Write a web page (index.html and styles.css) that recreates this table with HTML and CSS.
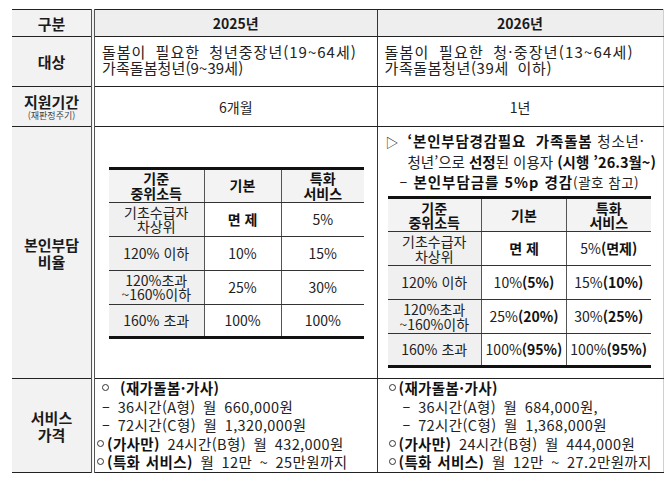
FILE: index.html
```html
<!DOCTYPE html>
<html lang="ko">
<head>
<meta charset="utf-8">
<link rel="stylesheet" href="styles.css">
</head>
<body>
<table class="main">
  <colgroup><col class="c1"><col class="c2"><col class="c3"></colgroup>
  <tr class="r-head">
    <th class="lab"><div class="box">구분</div></th>
    <th class="yr"><div class="box">2025년</div></th>
    <th class="yr"><div class="box">2026년</div></th>
  </tr>
  <tr class="r-target">
    <th class="lab"><div class="box">대상</div></th>
    <td class="txt t25"><div class="box"><span class="a">돌봄이 필요한 청년중장년(19~64세)</span><span class="c">가족돌봄청년(9~39세)</span></div></td>
    <td class="txt t26"><div class="box"><span class="a">돌봄이 필요한 청·중장년(13~64세)</span><span class="c">가족돌봄청년(39세 이하)</span></div></td>
  </tr>
  <tr class="r-period">
    <th class="lab"><div class="box">지원기간<span class="sublab">(재판정주기)</span></div></th>
    <td class="ctr"><div class="box">6개월</div></td>
    <td class="ctr"><div class="box">1년</div></td>
  </tr>
  <tr class="r-ratio">
    <th class="lab"><div class="box">본인부담<br>비율</div></th>
    <td class="ratio25">
      <div class="box">
        <table class="sub sub25">
          <colgroup><col class="s1"><col class="s2"><col class="s3"></colgroup>
          <tr class="sh"><th><div class="b">기준<br>중위소득</div></th><th><div class="b">기본</div></th><th><div class="b">특화<br>서비스</div></th></tr>
          <tr><td class="k"><div class="b">기초수급자<br>차상위</div></td><td><div class="b"><b>면 제</b></div></td><td><div class="b">5%</div></td></tr>
          <tr><td class="k"><div class="b">120% 이하</div></td><td><div class="b">10%</div></td><td><div class="b">15%</div></td></tr>
          <tr><td class="k"><div class="b">120%초과<br>~160%이하</div></td><td><div class="b">25%</div></td><td><div class="b">30%</div></td></tr>
          <tr class="last"><td class="k"><div class="b">160% 초과</div></td><td><div class="b">100%</div></td><td><div class="b">100%</div></td></tr>
        </table>
      </div>
    </td>
    <td class="ratio26">
      <div class="box">
        <div class="intro">
          <div class="l1"><span class="tri">▷</span><b>‘본인부담경감필요&nbsp; 가족돌봄</b> 청소년·</div>
          <div class="l2">청년’으로 <b>선정</b>된 이용자 <b>(시행 ’26.3월~)</b></div>
          <div class="l3">– <b>본인부담금를 5%p 경감</b><span class="sm">(괄호 참고)</span></div>
        </div>
        <table class="sub sub26">
          <colgroup><col class="t1"><col class="t2"><col class="t3"></colgroup>
          <tr class="sh"><th><div class="b">기준<br>중위소득</div></th><th><div class="b">기본</div></th><th><div class="b">특화<br>서비스</div></th></tr>
          <tr><td class="k"><div class="b">기초수급자<br>차상위</div></td><td><div class="b"><b>면 제</b></div></td><td><div class="b"><span>5%<b>(면제)</b></span></div></td></tr>
          <tr><td class="k"><div class="b">120% 이하</div></td><td><div class="b"><span>10%<b>(5%)</b></span></div></td><td><div class="b"><span>15%<b>(10%)</b></span></div></td></tr>
          <tr><td class="k"><div class="b">120%초과<br>~160%이하</div></td><td><div class="b"><span>25%<b>(20%)</b></span></div></td><td><div class="b"><span>30%<b>(25%)</b></span></div></td></tr>
          <tr class="last"><td class="k"><div class="b">160% 초과</div></td><td><div class="b"><span>100%<b>(95%)</b></span></div></td><td><div class="b"><span>100%<b>(95%)</b></span></div></td></tr>
        </table>
      </div>
    </td>
  </tr>
  <tr class="r-price">
    <th class="lab"><div class="box">서비스<br>가격</div></th>
    <td class="price p25">
      <div class="box">
        <div class="pa"><span class="dot"></span><b>(재가돌봄·가사)</b></div>
        <div class="pd">– 36시간(A형) 월 660,000원</div>
        <div class="pd">– 72시간(C형) 월 1,320,000원</div>
        <div class="pc"><span class="dot"></span><b>(가사만)</b> 24시간(B형) 월 432,000원</div>
        <div class="pc"><span class="dot"></span><b>(특화 서비스)</b> 월 12만 ~ 25만원까지</div>
      </div>
    </td>
    <td class="price p26">
      <div class="box">
        <div class="pc"><span class="dot"></span><b>(재가돌봄·가사)</b></div>
        <div class="pd">– 36시간(A형) 월 684,000원,</div>
        <div class="pd">– 72시간(C형) 월 1,368,000원</div>
        <div class="pc"><span class="dot"></span><b>(가사만)</b> 24시간(B형) 월 444,000원</div>
        <div class="pc"><span class="dot"></span><b>(특화 서비스)</b> 월 12만 ~ 27.2만원까지</div>
      </div>
    </td>
  </tr>
</table>
</body>
</html>
```

FILE: styles.css
```css
html, body {
  margin: 0;
  padding: 0;
  background: #ffffff;
}
body {
  font-family: "Noto Sans CJK KR", "Noto Sans", sans-serif;
  color: #1a1a1a;
  font-size: 15px;
}
.main {
  border-collapse: collapse;
  table-layout: fixed;
  width: 651px;
  margin: 9px 0 0 12px;
}
.c1 { width: 81px; }
.c2 { width: 284px; }
.c3 { width: 286px; }
.main > tbody > tr > th,
.main > tbody > tr > td {
  border-top: 1px solid #222;
  border-bottom: 1px solid #222;
  padding: 0;
  vertical-align: top;
}
.main > tbody > tr > td + td,
.main > tbody > tr > th + th {
  border-left: 1px solid #333;
}
.main > tbody > tr > td:last-child,
.main > tbody > tr > th:last-child {
  border-right: 1px solid #d0d0d0;
}
.box {
  box-sizing: border-box;
  display: flex;
  flex-direction: column;
  justify-content: center;
}
.r-head .box { height: 26px; align-items: center; }
.r-target .box { height: 49px; }
.r-period .box { height: 39px; align-items: center; }
.r-ratio .box { height: 251px; }
.r-price .box { height: 93px; }

.main th.lab {
  background: #f2f2f2;
  border-right: 4px double #555;
  font-weight: bold;
  font-size: 15px;
}
.lab .box {
  align-items: center;
  text-align: center;
  line-height: 17px;
}
.r-head th {
  background: #eeeeee;
  font-weight: bold;
  font-size: 14px;
}

.txt .box {
  padding: 0 0 4px 7px;
  line-height: 16px;
  white-space: nowrap;
  color: #222;
}
.t25 .a { letter-spacing: 1px; word-spacing: 4px; }
.t25 .c { letter-spacing: 0.1px; }
.t26 .a { letter-spacing: 1.2px; word-spacing: 4px; }
.t26 .c { letter-spacing: 0.6px; word-spacing: 4px; }
.ctr {
  font-size: 14px;
  color: #222;
}
.sublab {
  display: block;
  margin-top: 1px;
  font-size: 9px;
  font-weight: normal;
  line-height: 10px;
  color: #444;
}

/* inner tables */
.sub {
  border-collapse: collapse;
  table-layout: fixed;
  font-size: 14px;
  color: #222;
}
.sub th, .sub td {
  padding: 0;
  border-bottom: 1px solid #333;
  border-left: 1px solid #555;
}
.sub th:first-child, .sub td:first-child { border-left: none; }
.sub .b {
  height: 33px;
  display: flex;
  align-items: center;
  justify-content: center;
  text-align: center;
  line-height: 14.5px;
  white-space: nowrap;
}
.sub tr.sh th {
  background: #f3f3f3;
  border-top: 3px solid #111;
  font-weight: bold;
  color: #111;
}
.sub tr.sh .b { height: 32px; }
.sub tr.last td { border-bottom: 3px solid #111; }
.sub tr.last .b { height: 31px; }
.sub td.k { background: #f0f0f0; }
.sub b { color: #111; }

.ratio25 .box { padding: 0 15px 0 14px; }
.sub25 { width: 255px; }
.s1 { width: 95px; }
.s2 { width: 77px; }
.s3 { width: 83px; }

.ratio26 .box { padding: 0 12px 6px 8px; }
.intro {
  font-size: 14.5px;
  line-height: 20px;
  white-space: nowrap;
  color: #222;
  margin-bottom: 4px;
}
.intro b { color: #111; }
.tri {
  display: inline-block;
  width: 22px;
  font-size: 13px;
}
.l1 { letter-spacing: 0.8px; }
.l2 { padding-left: 22px; }
.l3 { padding-left: 14px; letter-spacing: 1px; }
.sm { font-size: 13.5px; letter-spacing: 0.5px; }
.sub26 { width: 263px; margin-left: 2px; }
.t1 { width: 94px; }
.t2 { width: 85px; }
.t3 { width: 84px; }

.price .box {
  font-size: 14.5px;
  line-height: 18.5px;
  white-space: nowrap;
  word-spacing: 3px;
  letter-spacing: 0.4px;
  color: #222;
}
.price b { color: #111; word-spacing: 1px; }
.dot {
  display: inline-block;
  width: 5px;
  height: 5px;
  border: 1px solid #333;
  border-radius: 50%;
  vertical-align: 3px;
  margin-right: 3px;
}
.p25 .pa { padding-left: 7px; }
.p25 .pa .dot { margin-right: 11px; }
.p25 .pd { padding-left: 7px; }
.p25 .pc { padding-left: 2px; }
.p26 .pc { padding-left: 11px; }
.p26 .pd { padding-left: 25px; }
```
